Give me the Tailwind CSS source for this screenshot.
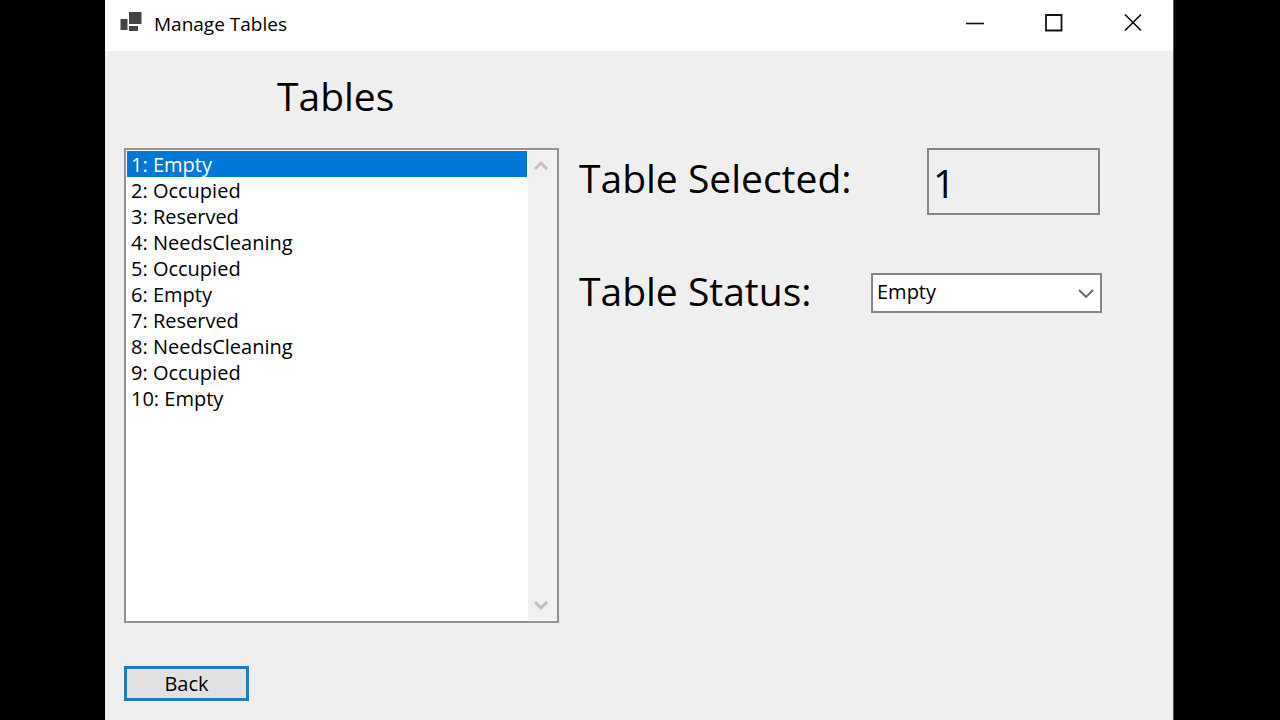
<!DOCTYPE html>
<html lang="en">
<head>
<meta charset="utf-8">
<meta name="viewport" content="width=device-width, initial-scale=1">
<title>Manage Tables</title>
<script src="https://cdn.jsdelivr.net/npm/@tailwindcss/browser@4"></script>
</head>
<body class="bg-black font-['Open_Sans','Noto_Sans',sans-serif] text-black">
<div class="flex min-h-screen flex-col pl-[105px] pr-[106px]">
  <div class="flex flex-1 flex-col border-r border-[#555] bg-[#efefef]">
    <header class="flex h-[51px] items-start justify-between bg-white">
      <div class="flex h-12 items-center gap-3 pl-[15px]">
        <svg class="h-6 w-[22px]" viewBox="0 0 22 24" fill="#444" aria-hidden="true">
          <path d="M9 0h12.500v12H9zM0.500 7h7v11h-7zM9 14h9v5H9z"/>
        </svg>
        <h1 class="text-[19px] leading-6">Manage Tables</h1>
      </div>
      <div class="flex h-[46px]">
        <button type="button" aria-label="Minimize" class="flex w-[78px] items-center justify-center">
          <svg class="size-5" viewBox="0 0 20 20" stroke="#111" stroke-width="1.6" fill="none"><path d="M1 10.500h18"/></svg>
        </button>
        <button type="button" aria-label="Maximize" class="flex w-[79px] items-center justify-center">
          <svg class="size-5" viewBox="0 0 20 20" stroke="#111" stroke-width="1.8" fill="none"><path d="M2 2h15.500v15.500H2z"/></svg>
        </button>
        <button type="button" aria-label="Close" class="flex w-20 items-center justify-center">
          <svg class="size-5" viewBox="0 0 20 20" stroke="#111" stroke-width="1.7" fill="none"><path d="M2 1.500l16 16M18 1.500L2 17.500"/></svg>
        </button>
      </div>
    </header>

    <main class="flex items-start gap-5 pl-[19px] pr-[71px]">
      <section class="w-[435px] shrink-0">
        <label for="tables" class="block pt-[19px] pl-[153px] text-[39px] leading-[52px]">Tables</label>
        <div class="mt-[26px] flex h-[475px] border-2 border-[#8f9296] bg-white">
          <select id="tables" size="10" class="min-w-0 flex-1 appearance-none overflow-hidden bg-none p-px text-[20px] outline-none [&>option]:h-[26px] [&>option]:p-0 [&>option]:pl-1 [&>option]:leading-[26px] [&>option:checked]:bg-linear-to-r [&>option:checked]:from-[#0078d7] [&>option:checked]:to-[#0078d7] [&>option:checked]:text-white">
            <option selected>1: Empty</option>
            <option>2: Occupied</option>
            <option>3: Reserved</option>
            <option>4: NeedsCleaning</option>
            <option>5: Occupied</option>
            <option>6: Empty</option>
            <option>7: Reserved</option>
            <option>8: NeedsCleaning</option>
            <option>9: Occupied</option>
            <option>10: Empty</option>
          </select>
          <div class="my-px flex w-[29px] flex-col justify-between bg-[#f0f0f0] py-[6px]">
            <button type="button" aria-label="Scroll up" class="flex h-4 w-[25px] items-center justify-center">
              <svg class="h-3 w-4" viewBox="0 0 16 12" stroke="#bfbfbf" stroke-width="3" fill="none"><path d="M2 10l6-6 6 6"/></svg>
            </button>
            <button type="button" aria-label="Scroll down" class="flex h-4 w-[25px] items-center justify-center">
              <svg class="h-3 w-4" viewBox="0 0 16 12" stroke="#bfbfbf" stroke-width="3" fill="none"><path d="M2 2l6 6 6-6"/></svg>
            </button>
          </div>
        </div>
        <button type="button" class="mt-[43px] mb-5 flex h-[35px] w-[125px] items-center justify-center border-3 border-[#1d7cc4] bg-[#e1e1e1] text-[20px]">Back</button>
      </section>

      <section class="min-w-0 flex-1 pt-[97px]">
        <div class="flex items-start justify-between pr-[2px]">
          <label for="selected" class="pt-1 text-[39px] leading-[52px]">Table Selected:</label>
          <input id="selected" type="text" value="1" readonly class="h-[67px] w-[173px] border-2 border-[#858585] bg-transparent px-1 pt-[2px] text-[39px] outline-none">
        </div>
        <div class="mt-[50px] flex items-start justify-between">
          <label for="status" class="text-[39px] leading-[52px]">Table Status:</label>
          <div class="relative mt-2 w-[231px]">
            <select id="status" class="block h-10 w-full appearance-none border-2 border-[#858585] bg-white pb-[3px] pl-1 text-[20px]">
              <option>Empty</option>
              <option>Occupied</option>
              <option>Reserved</option>
              <option>NeedsCleaning</option>
            </select>
            <svg class="pointer-events-none absolute top-[15px] right-2 h-3 w-4" viewBox="0 0 16 12" stroke="#666" stroke-width="1.8" fill="none"><path d="M1 2l7 7 7-7"/></svg>
          </div>
        </div>
      </section>
    </main>
  </div>
</div>
</body>
</html>
